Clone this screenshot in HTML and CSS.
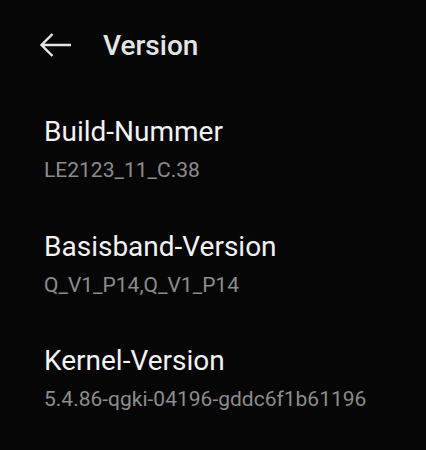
FILE: index.html
```html
<!DOCTYPE html>
<html>
<head>
<meta charset="utf-8">
<link rel="stylesheet" href="styles.css">
</head>
<body>
<div class="screen">
  <header class="toolbar">
    <svg class="back" width="34" height="26" viewBox="0 0 34 26">
      <path d="M32 13H3M13.5 2L2.5 13L13.5 24" fill="none" stroke="#e6e6e6" stroke-width="2.4" stroke-linecap="butt" stroke-linejoin="miter"/>
    </svg>
    <h1 class="title">Version</h1>
  </header>
  <ul class="list">
    <li class="item">
      <div class="label">Build-Nummer</div>
      <div class="value">LE2123_11_C.38</div>
    </li>
    <li class="item">
      <div class="label">Basisband-Version</div>
      <div class="value">Q_V1_P14,Q_V1_P14</div>
    </li>
    <li class="item">
      <div class="label">Kernel-Version</div>
      <div class="value">5.4.86-qgki-04196-gddc6f1b61196</div>
    </li>
  </ul>
</div>
</body>
</html>
```
FILE: styles.css
```css
html, body {
  margin: 0;
  padding: 0;
  background: #060606;
}
.screen {
  width: 426px;
  height: 450px;
  background: #060606;
  font-family: Roboto, "Noto Sans", sans-serif;
  overflow: hidden;
}
.toolbar {
  display: flex;
  align-items: center;
  height: 90px;
  padding-left: 39px;
}
.back {
  display: block;
  margin-right: 30px;
}
.title {
  margin: 0;
  font-size: 28px;
  font-weight: 500;
  color: #e4e4e4;
}
.list {
  list-style: none;
  margin: 0;
  padding: 0;
}
.item {
  padding: 24px 44px 19.5px;
}
.label {
  font-size: 28px;
  color: #f2f2f2;
  line-height: 36px;
}
.value {
  margin-top: 5px;
  font-size: 21px;
  color: #8c8c8c;
  line-height: 30px;
}
```
